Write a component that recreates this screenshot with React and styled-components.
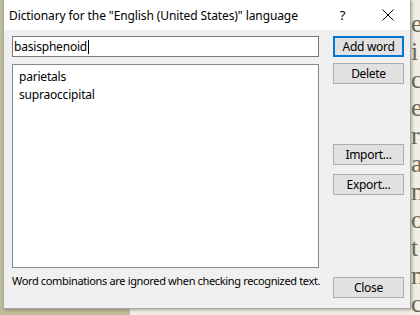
import React from "react";
import styled, { createGlobalStyle } from "styled-components";

const Global = createGlobalStyle`
  html, body {
    margin: 0;
    padding: 0;
    width: 420px;
    height: 315px;
    overflow: hidden;
  }
  body {
    font-family: "Segoe UI", "Noto Sans", sans-serif;
  }
`;

const Desktop = styled.div`
  position: relative;
  width: 420px;
  height: 315px;
  background: #c2bd98;
  overflow: hidden;
`;

const Page = styled.div`
  position: absolute;
  left: 130px;
  top: 0;
  right: 0;
  bottom: 0;
  background: #f1eee6;
  padding: 10px 0 0 281px;
  font-family: "Liberation Serif", serif;
  font-size: 26px;
  line-height: 28px;
  color: #6e6a58;
`;

const Dialog = styled.div`
  position: absolute;
  left: 3px;
  top: 0;
  width: 406px;
  height: 308px;
  background: #f0f0f0;
  border: 1px solid #a7a7a7;
  border-top: none;
  display: flex;
  flex-direction: column;
  box-shadow: 1px 1px 3px rgba(0, 0, 0, 0.3);
`;

const TitleBar = styled.div`
  height: 30px;
  background: #ffffff;
  display: flex;
  align-items: center;
  padding-left: 5px;
  font-size: 12px;
  letter-spacing: -0.1px;
  color: #000;
`;

const Title = styled.div`
  flex: 1;
  white-space: nowrap;
`;

const TitleButton = styled.div`
  width: 45px;
  height: 30px;
  display: flex;
  align-items: center;
  justify-content: center;
  font-size: 13px;
  color: #000;
`;

const Body = styled.div`
  flex: 1;
  display: flex;
  padding: 6px 6px 10px 8px;
  gap: 14px;
`;

const LeftCol = styled.div`
  width: 307px;
  display: flex;
  flex-direction: column;
`;

const RightCol = styled.div`
  flex: 1;
  display: flex;
  flex-direction: column;
`;

const Input = styled.div`
  height: 21px;
  box-sizing: border-box;
  border: 1px solid #7a7a7a;
  background: #fff;
  font-size: 12px;
  letter-spacing: -0.2px;
  padding-left: 1px;
  display: flex;
  align-items: center;
`;

const Caret = styled.span`
  display: inline-block;
  width: 1px;
  height: 14px;
  background: #000;
  margin-left: 1px;
`;

const List = styled.div`
  margin-top: 7px;
  height: 204px;
  box-sizing: border-box;
  border: 1px solid #828790;
  background: #fff;
  padding: 3px 0 0 6px;
`;

const Item = styled.div`
  font-size: 12px;
  letter-spacing: -0.2px;
  line-height: 18px;
  color: #000;
`;

const Note = styled.div`
  margin-top: 4px;
  font-size: 11px;
  letter-spacing: -0.35px;
  line-height: 17px;
  white-space: nowrap;
  color: #000;
`;

const Button = styled.div`
  height: 21px;
  box-sizing: border-box;
  margin-top: ${(p) => p.$gap || 0}px;
  border: 1px solid ${(p) => (p.$primary ? "#0078d7" : "#adadad")};
  box-shadow: ${(p) => (p.$primary ? "inset 0 0 0 1px #0078d7" : "none")};
  background: #e1e1e1;
  font-size: 12px;
  letter-spacing: -0.3px;
  display: flex;
  align-items: center;
  justify-content: center;
  color: #000;
`;

const Spacer = styled.div`
  flex: 1;
`;

const CloseIcon = () => (
  <svg width="12" height="12" viewBox="0 0 12 12">
    <path d="M0.5 0.5 L11.5 11.5 M11.5 0.5 L0.5 11.5" stroke="#000" strokeWidth="1" />
  </svg>
);

export default function App() {
  return (
    <Desktop>
      <Global />
      <Page>
        e<br />i<br />c<br />e<br />r<br />a<br />n<br />o<br />t<br />n<br />c
      </Page>
      <Dialog>
        <TitleBar>
          <Title>Dictionary for the "English (United States)" language</Title>
          <TitleButton>?</TitleButton>
          <TitleButton>
            <CloseIcon />
          </TitleButton>
        </TitleBar>
        <Body>
          <LeftCol>
            <Input>
              basisphenoid
              <Caret />
            </Input>
            <List>
              <Item>parietals</Item>
              <Item>supraoccipital</Item>
            </List>
            <Note>Word combinations are ignored when checking recognized text.</Note>
          </LeftCol>
          <RightCol>
            <Button $primary>Add word</Button>
            <Button $gap={6}>Delete</Button>
            <Button $gap={60}>Import...</Button>
            <Button $gap={9}>Export...</Button>
            <Spacer />
            <Button>Close</Button>
          </RightCol>
        </Body>
      </Dialog>
    </Desktop>
  );
}
